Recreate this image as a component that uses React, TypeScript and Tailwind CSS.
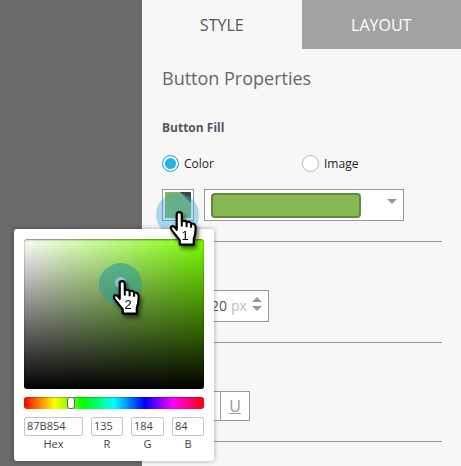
import React from "react";

function Hand({ label }: { label: string }) {
  return (
    <svg
      aria-hidden="true"
      width="34"
      height="42"
      viewBox="0 0 34 42"
      className="block overflow-visible drop-shadow-[2px_3px_2px_rgba(0,0,0,0.6)]"
    >
      <path
        d="M10.3 3.2C11.9 3.2 12.8 4.2 12.8 5.8V12.4C14.5 11.4 17.2 11.9 17.7 13.2C19.2 12.4 21.7 13 22.1 14.6C24.2 14.2 26.4 15.4 26.5 17.8C26.8 22 26.4 26 24.8 29.8V35.6H10.8V31.4C8.4 28.4 5.7 25 2.9 21.4C1.5 19.4 1.7 17.5 3.3 17.2C5 17 6.5 18.8 7.7 20.8V5.8C7.7 4.2 8.7 3.2 10.3 3.2Z"
        fill="white"
        stroke="black"
        strokeWidth="2.2"
        strokeLinejoin="round"
      />
      <path d="M12.8 12V17.6M17.6 13.2V18.2M22.1 14.6V18.8" fill="none" stroke="black" strokeWidth="2" />
      <text x="16" y="31" textAnchor="middle" fontSize="13" fontFamily="Liberation Sans, sans-serif" fill="black">
        {label}
      </text>
    </svg>
  );
}

function RadioOption({ label, checked }: { label: string; checked?: boolean }) {
  return (
    <label className="flex w-[140px] items-center gap-[5px] text-xs text-[#222]">
      <input
        type="radio"
        name="fill"
        defaultChecked={checked}
        className="size-[17px] appearance-none rounded-full border border-[#b5b5b5] bg-white checked:border-[#27b0e4] checked:bg-[#27b0e4] checked:shadow-[inset_0_0_0_2px_white]"
      />
      {label}
    </label>
  );
}

function ColorField({ label, value, width }: { label: string; value: string; width: string }) {
  return (
    <label className={`${width} flex flex-col text-center text-[11px] leading-4 text-[#444]`}>
      <input
        defaultValue={value}
        className="order-first h-[19px] w-full rounded-[2px] border border-[#c4c4c4] bg-white px-[2px] pb-[2px] text-[11px] text-[#444] outline-none"
      />
      {label}
    </label>
  );
}

function ColorPicker() {
  return (
    <div
      role="dialog"
      aria-label="Color picker"
      className="absolute top-[229px] left-[14px] w-[200px] rounded-[3px] bg-white p-[10px] pb-[9px] shadow-[0_0_5px_rgba(0,0,0,0.35)]"
    >
      <div className="relative h-[150px] rounded-[3px] bg-[linear-gradient(to_top,black,transparent),linear-gradient(to_right,white,transparent)] bg-[#7dff00] shadow-[inset_0_1px_2px_rgba(0,0,0,0.5)]">
        <div className="absolute top-[24px] left-[75px] size-[43px] rounded-full bg-[#309b96]/60" />
        <div className="absolute top-[38px] left-[91px] size-[11px] rounded-full border-[3px] border-[#94bfe2]" />
        <div className="absolute top-[39px] left-[88px]">
          <Hand label="2" />
        </div>
      </div>
      <div className="relative mt-2 h-3 rounded-[3px] bg-[linear-gradient(to_right,#f00,#ff0_17%,#0f0_33%,#0ff_50%,#00f_67%,#f0f_83%,#f00)] shadow-[inset_0_1px_1px_rgba(0,0,0,0.25)]">
        <div className="absolute top-0 left-[43px] h-3 w-2 rounded-[3px] border border-[#666] bg-white" />
      </div>
      <div className="mt-2 flex justify-between">
        <ColorField label="Hex" value="87B854" width="w-[59px]" />
        <ColorField label="R" value="135" width="w-8" />
        <ColorField label="G" value="184" width="w-[33px]" />
        <ColorField label="B" value="84" width="w-8" />
      </div>
    </div>
  );
}

export default function App() {
  return (
    <div className="relative flex min-h-screen overflow-hidden bg-[#f7f7f7] font-['Open_Sans',sans-serif] text-[#55565a]">
      <aside className="w-[142px] shrink-0 bg-[#6a6a6a]" />
      <main className="min-w-0 flex-1">
        <div role="tablist" className="grid grid-cols-2 text-base">
          <button role="tab" aria-selected="true" className="h-[49px]">
            STYLE
          </button>
          <button role="tab" aria-selected="false" className="h-[49px] bg-[#a2a2a2] text-white">
            LAYOUT
          </button>
        </div>
        <div className="pr-[19px] pl-5">
          <h1 className="pt-[15px] text-lg leading-7 font-normal text-[#66676b]">Button Properties</h1>
          <section className="border-b border-[#999] pb-5">
            <h2 className="pt-7 text-xs leading-4 font-bold">Button Fill</h2>
            <div className="mt-[19px] flex">
              <RadioOption label="Color" checked />
              <RadioOption label="Image" />
            </div>
            <div className="mt-[17px] flex gap-[10px]">
              <button
                aria-label="Pick fill color"
                className="relative size-8 border border-[#999] bg-white p-[2px]"
              >
                <svg viewBox="0 0 26 26" className="size-[26px]">
                  <path d="M0 0H26V26H0Z" fill="#87b854" />
                  <path d="M15 0H26V11Z" fill="#444" />
                </svg>
                <span className="absolute top-[3px] -left-[7px] size-[43px] rounded-full bg-[#38a5e6]/40" />
              </button>
              <button
                aria-label="Button fill style"
                aria-haspopup="listbox"
                className="flex h-8 w-[200px] items-center justify-between border border-[#999] bg-white px-[6px]"
              >
                <span className="h-[25px] w-[150px] rounded-[4px] border-2 border-[#608b3c] bg-[#87b854]" />
                <svg viewBox="0 0 10 5" className="mb-2 h-[5px] w-[10px]">
                  <path d="M0 0H10L5 5Z" fill="#999" />
                </svg>
              </button>
            </div>
          </section>
          <section className="border-b border-[#999] pt-12 pb-5">
            <div className="flex h-8 w-[107px] items-center border border-[#999] bg-white pr-[6px] text-sm">
              <input aria-label="Size in pixels" defaultValue="20" className="w-16 min-w-0 text-right outline-none" />
              <span className="ml-1 text-[#bbb]">px</span>
              <button aria-label="Change size" className="ml-auto">
                <svg viewBox="0 0 10 14" className="mb-1 h-[14px] w-[10px]">
                  <path d="M0 5L5 0L10 5ZM0 9H10L5 14Z" fill="#999" />
                </svg>
              </button>
            </div>
          </section>
          <section className="border-b border-[#999] pt-12 pb-5">
            <div className="flex h-[30px] w-[88px] border border-[#999] bg-white">
              <button aria-label="Italic" className="flex-1" />
              <button className="w-[29px] border-l border-[#999] text-base text-[#999] underline">U</button>
            </div>
          </section>
        </div>
      </main>
      <ColorPicker />
      <div className="absolute top-[209px] left-[169px]">
        <Hand label="1" />
      </div>
    </div>
  );
}
